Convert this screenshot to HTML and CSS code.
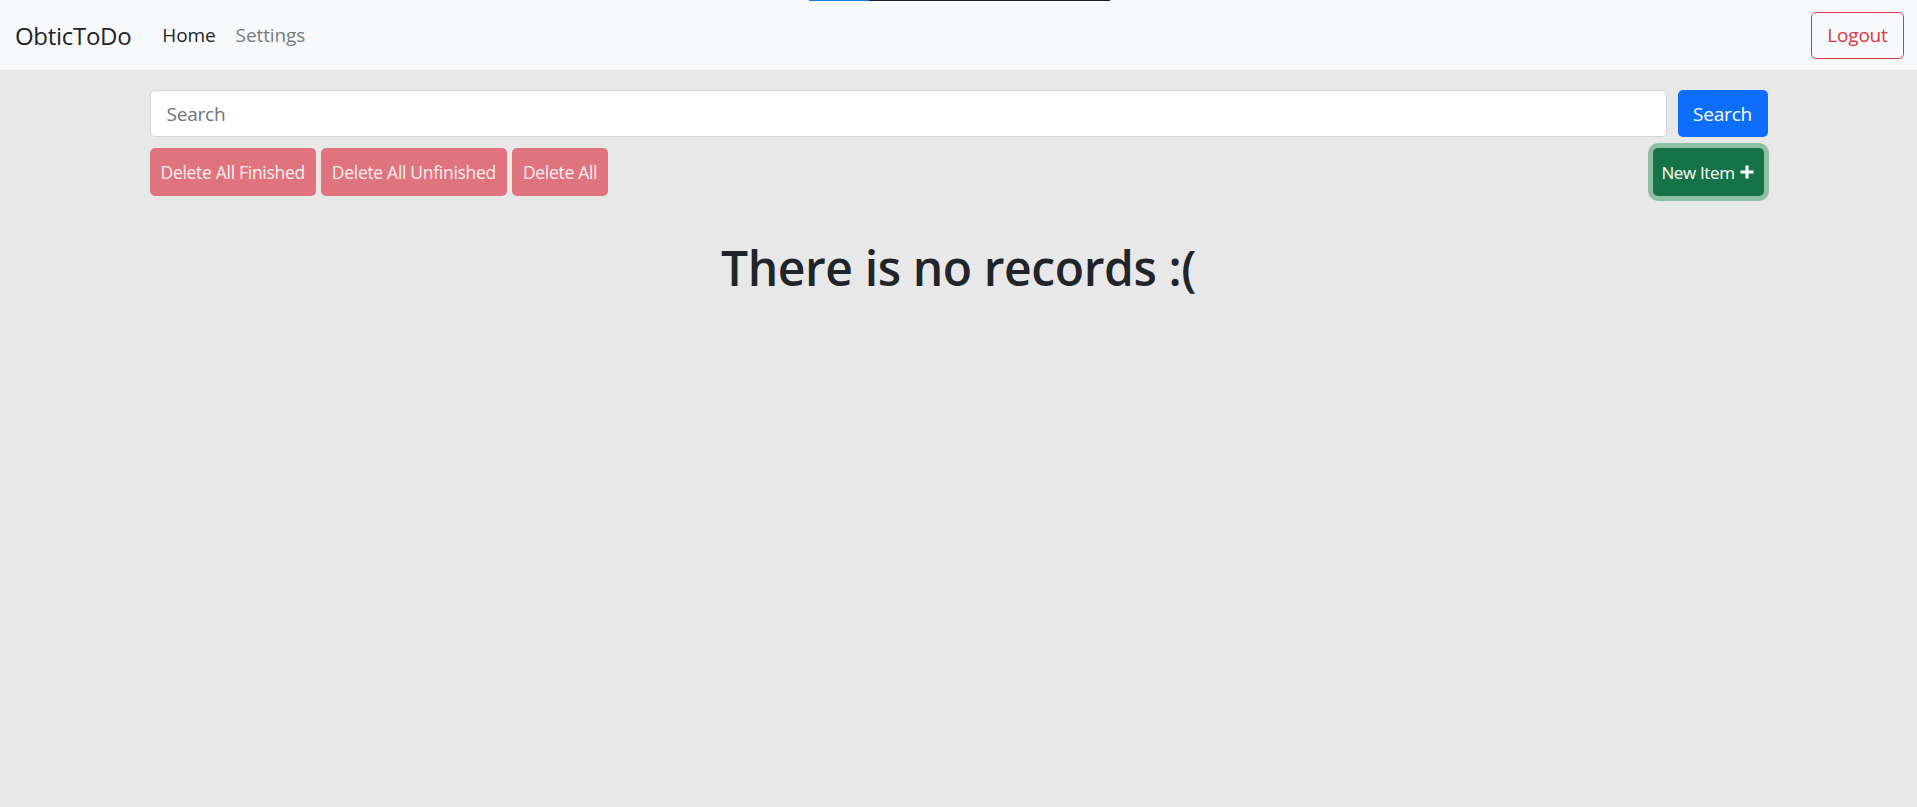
FILE: index.html
```html
<!DOCTYPE html>
<html lang="en">
<head>
<meta charset="utf-8">
<title>ObticToDo</title>
<link rel="stylesheet" href="styles.css">
</head>
<body>
<div class="loader"><span class="loader-blue"></span><span class="loader-dark"></span></div>
<nav class="navbar">
  <div class="nav-left">
    <a class="brand" href="#">ObticToDo</a>
    <a class="nav-link active" href="#">Home</a>
    <a class="nav-link" href="#">Settings</a>
  </div>
  <button class="btn-logout">Logout</button>
</nav>
<main class="container">
  <div class="search-row">
    <input class="search-input" type="text" placeholder="Search">
    <button class="btn btn-primary">Search</button>
  </div>
  <div class="action-row">
    <div class="delete-group">
      <button class="btn btn-danger-disabled">Delete All Finished</button>
      <button class="btn btn-danger-disabled">Delete All Unfinished</button>
      <button class="btn btn-danger-disabled">Delete All</button>
    </div>
    <button class="btn btn-success-focus">New Item <svg class="plus" viewBox="0 0 16 16" width="16" height="16"><path d="M8 1.5v13M1.5 8h13" stroke="#fff" stroke-width="3.2" stroke-linecap="butt"/></svg></button>
  </div>
  <h1 class="empty">There is no records :(</h1>
</main>
</body>
</html>
```

FILE: styles.css
```css
* { box-sizing: border-box; }
html, body { margin: 0; padding: 0; }
body {
  background: #e8e8e8;
  font-family: "Open Sans", "Noto Sans", sans-serif;
  color: #212529;
  height: 807px;
  overflow: hidden;
}
.loader {
  position: absolute;
  top: 0;
  left: 809px;
  height: 1px;
  display: flex;
  z-index: 2;
}
.loader-blue { width: 60px; background: #0d7fe6; }
.loader-dark { width: 241px; background: #1e1e1e; }
.navbar {
  background: #f8f9fa;
  height: 70px;
  display: flex;
  align-items: center;
  justify-content: space-between;
  padding: 0 13px 0 15px;
}
.nav-left { display: flex; align-items: center; }
.brand {
  font-size: 24px;
  color: #212529;
  text-decoration: none;
  margin-right: 31px;
  letter-spacing: -0.3px;
}
.nav-link {
  font-size: 19px;
  color: #767b80;
  text-decoration: none;
  margin-right: 20px;
  letter-spacing: -0.1px;
}
.nav-link.active { color: #212529; }
.btn-logout {
  font-family: inherit;
  font-size: 19px;
  color: #dc3545;
  background: transparent;
  border: 1px solid #dc3545;
  border-radius: 5px;
  height: 47px;
  width: 93px;
  padding: 0;
  letter-spacing: -0.2px;
}
.container {
  width: 1618px;
  margin: 0 auto;
  padding-top: 20px;
}
.search-row {
  display: flex;
  gap: 11px;
  height: 47px;
}
.search-input {
  flex: 1;
  height: 47px;
  border: 1px solid #ced4da;
  border-radius: 5px;
  background: #fff;
  font-family: inherit;
  font-size: 19px;
  padding: 0 16px;
  color: #212529;
  outline: none;
}
.search-input::placeholder { color: #6c757d; letter-spacing: -0.2px; }
.btn {
  font-family: inherit;
  border: 0;
  border-radius: 5px;
  color: #fff;
  cursor: pointer;
}
.btn-primary {
  background: #0d6efd;
  width: 90px;
  height: 47px;
  font-size: 19px;
  padding: 0;
  letter-spacing: -0.2px;
}
.action-row {
  display: flex;
  justify-content: space-between;
  align-items: center;
  margin-top: 11px;
  height: 48px;
}
.delete-group { display: flex; gap: 5px; }
.btn-danger-disabled {
  background: #e0747e;
  color: #fbeef0;
  height: 48px;
  font-size: 17.5px;
  padding: 0 11px;
  letter-spacing: -0.3px;
}
.btn-success-focus {
  background: #157347;
  height: 48px;
  width: 111px;
  font-size: 17px;
  padding: 0;
  letter-spacing: -0.35px;
  box-shadow: 0 0 0 5px #8dbfa4;
  margin-right: 4px;
  display: flex;
  align-items: center;
  justify-content: center;
  gap: 4px;
}
.plus { display: block; width: 16px; height: 16px; }
.empty {
  text-align: center;
  font-size: 48px;
  font-weight: 600;
  margin: 39px 0 0;
  letter-spacing: -0.4px;
}
```
